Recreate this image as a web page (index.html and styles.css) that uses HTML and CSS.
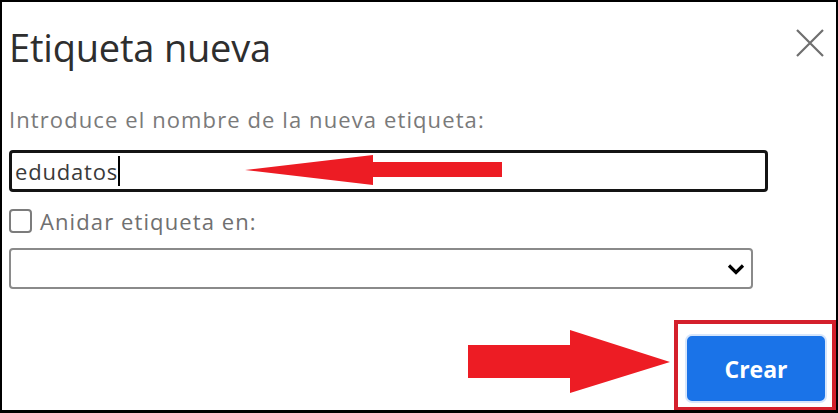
FILE: index.html
```html
<!DOCTYPE html>
<html lang="es">
<head>
<meta charset="utf-8">
<title>Etiqueta nueva</title>
<link rel="stylesheet" href="styles.css">
</head>
<body>
<div class="frame">
  <div class="header">
    <h1 class="title">Etiqueta nueva</h1>
    <svg class="close" width="30" height="30" viewBox="0 0 30 30" aria-label="Cerrar">
      <path d="M2 2L28 28M28 2L2 28" stroke="#6f6f6f" stroke-width="2.2" fill="none"/>
    </svg>
  </div>
  <div class="label">Introduce el nombre de la nueva etiqueta:</div>
  <div class="input"><span class="value">edudatos</span><span class="caret"></span></div>
  <div class="check-row">
    <span class="checkbox"></span>
    <span class="check-label">Anidar etiqueta en:</span>
  </div>
  <div class="select">
    <svg class="chevron" width="18" height="12" viewBox="0 0 18 12">
      <path d="M2 2.5L9 9.5L16 2.5" stroke="#000" stroke-width="3.2" fill="none"/>
    </svg>
  </div>
  <div class="footer">
    <div class="highlight">
      <button class="btn">Crear</button>
    </div>
  </div>

  <svg class="arrow arrow-left" width="262" height="34" viewBox="0 0 262 34">
    <polygon points="0,15 128,0 128,7 257,7 257,22 128,22 128,30" fill="#ed1c24"/>
  </svg>
  <svg class="arrow arrow-right" width="206" height="66" viewBox="0 0 206 66">
    <polygon points="0,15 102,15 102,0 202,32 102,63 102,48 0,48" fill="#ed1c24"/>
  </svg>
</div>
</body>
</html>
```

FILE: styles.css
```css
* { box-sizing: border-box; }
html, body { margin: 0; padding: 0; background: #fff; }
.frame {
  position: relative;
  width: 838px;
  height: 413px;
  border: 2px solid #000;
  border-bottom-width: 3px;
  background: #fff;
  padding: 0 0 0 7px;
  font-family: "Open Sans", Roboto, "Liberation Sans", sans-serif;
  overflow: hidden;
}
.header {
  display: flex;
  justify-content: space-between;
  align-items: flex-start;
  padding-top: 21px;
  padding-right: 11px;
  height: 103px;
}
.title {
  margin: 0;
  font-family: "Open Sans", Roboto, sans-serif;
  font-weight: 400;
  font-size: 38px;
  line-height: 48px;
  color: #2e2e2e;
  letter-spacing: -0.2px;
}
.close { margin-top: 5px; }
.label {
  font-size: 22px;
  line-height: 28px;
  color: #7a7a7a;
  height: 45px;
  letter-spacing: 1.1px;
}
.input {
  width: 759px;
  height: 42px;
  border: 3px solid #141414;
  border-radius: 4px;
  display: flex;
  align-items: center;
  padding-left: 3px;
  font-size: 22px;
  color: #3a3a3a;
  letter-spacing: 0.8px;
}
.caret {
  width: 2px;
  height: 30px;
  background: #000;
  margin-left: 0;
}
.check-row {
  display: flex;
  align-items: center;
  gap: 8px;
  margin-top: 15px;
  height: 27px;
}
.checkbox {
  width: 23px;
  height: 24px;
  border: 2px solid #7c7c7c;
  border-radius: 4px;
}
.check-label {
  font-size: 22px;
  color: #707070;
  letter-spacing: 1.1px;
}
.select {
  width: 744px;
  height: 41px;
  margin-top: 14px;
  border: 2px solid #8a8a8a;
  border-radius: 4px;
  display: flex;
  align-items: center;
  justify-content: flex-end;
  padding-right: 6px;
}
.footer {
  display: flex;
  justify-content: flex-end;
  margin-top: 31px;
}
.highlight {
  border: 4px solid #d4202c;
  padding: 10px 5px 4px 7px;
}
.btn {
  display: block;
  width: 142px;
  height: 69px;
  border: 2px solid #d7e6fb;
  border-radius: 7px;
  background: #1a73e8;
  color: #fff;
  font-family: "Open Sans", Roboto, sans-serif;
  font-weight: 700;
  font-size: 23px;
  padding: 0;
}
.arrow { position: absolute; }
.arrow-left { left: 243px; top: 153px; }
.arrow-right { left: 466px; top: 328px; }
```
